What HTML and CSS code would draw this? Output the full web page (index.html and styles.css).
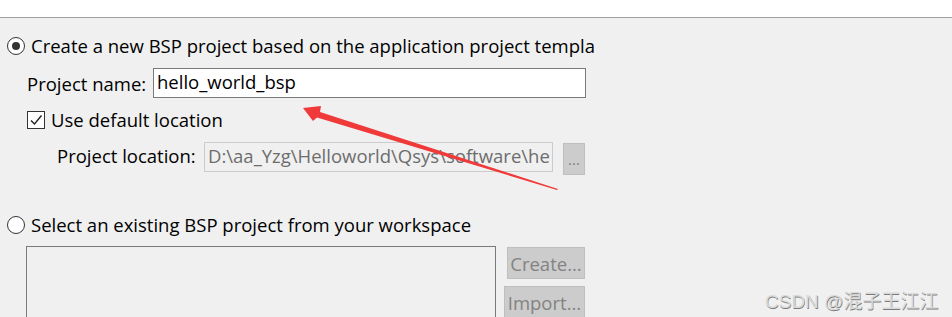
FILE: index.html
```html
<!DOCTYPE html>
<html lang="en">
<head>
    <meta charset="UTF-8">
    <title>New BSP Project</title>
    <link rel="stylesheet" href="styles.css">
</head>
<body>
    <div class="topbar"></div>
    <div class="panel">
        <div class="option first">
            <span class="radio checked"></span>
            <span>Create a new BSP project based on the application project templa</span>
        </div>
        <div class="field name-field">
            <label>Project name:</label>
            <div class="textbox">hello_world_bsp</div>
        </div>
        <div class="option check-row">
            <span class="checkbox">
                <svg width="14" height="14" viewBox="0 0 14 14"><path d="M2 7.5 L5.5 11 L12.5 2.5" fill="none" stroke="#222" stroke-width="1.4"/></svg>
            </span>
            <span>Use default location</span>
        </div>
        <div class="field location-field">
            <label>Project location:</label>
            <div class="textbox disabled">D:\aa_Yzg\Helloworld\Qsys\software\he</div>
            <div class="btn browse">...</div>
        </div>
        <div class="option second">
            <span class="radio"></span>
            <span>Select an existing BSP project from your workspace</span>
        </div>
        <div class="workspace">
            <div class="listbox"></div>
            <div class="side-buttons">
                <div class="btn create">Create...</div>
                <div class="btn import">Import...</div>
            </div>
        </div>
    </div>

    <svg class="arrow" width="952" height="317" viewBox="0 0 952 317">
        <polygon points="303,108 313,121 317,117.5 557,190 558,189 320,112 321,106" fill="#f03a3a"/>
    </svg>
    <div class="watermark">CSDN @混子王江江</div>
</body>
</html>
```

FILE: styles.css
```css
body {
    margin: 0;
    background-color: #f0f0f0;
    font-family: "Open Sans", "Noto Sans", sans-serif;
    font-size: 18.5px;
    color: #000;
    width: 952px;
    height: 317px;
    overflow: hidden;
    position: relative;
}
.topbar {
    height: 17px;
    background-color: #fff;
    border-bottom: 1px solid #a0a0a0;
}
.panel {
    display: flex;
    flex-direction: column;
}
.option {
    display: flex;
    align-items: center;
    height: 18px;
    line-height: 18px;
}
.option.first {
    margin-top: 19px;
    padding-left: 7px;
}
.option.second {
    margin-top: 44px;
    padding-left: 7px;
}
.option.check-row {
    margin-top: 13px;
    padding-left: 27px;
}
.radio {
    width: 16px;
    height: 16px;
    border: 1px solid #333;
    border-radius: 50%;
    background-color: #fff;
    margin-right: 6px;
    display: flex;
    align-items: center;
    justify-content: center;
}
.radio.checked::after {
    content: "";
    width: 8px;
    height: 8px;
    border-radius: 50%;
    background-color: #333;
}
.checkbox {
    width: 16px;
    height: 16px;
    border: 1px solid #333;
    background-color: #fff;
    margin-right: 6px;
    display: flex;
    align-items: center;
    justify-content: center;
}
.field {
    display: flex;
    align-items: center;
    height: 30px;
}
.name-field {
    margin-top: 13px;
    padding-left: 27px;
}
.name-field label {
    width: 126px;
}
.location-field {
    margin-top: 13px;
    padding-left: 57px;
}
.location-field label {
    width: 147px;
    margin-top: -3px;
}
.textbox {
    box-sizing: border-box;
    height: 30px;
    width: 433px;
    border: 1px solid #7a7a7a;
    background-color: #fff;
    padding-left: 3px;
    line-height: 26px;
    white-space: nowrap;
    overflow: hidden;
}
.textbox.disabled {
    width: 349px;
    border-color: #cccccc;
    background-color: #f0f0f0;
    color: #6d6d6d;
}
.btn {
    box-sizing: border-box;
    background-color: #cccccc;
    border: 1px solid #bfbfbf;
    color: #838383;
    display: flex;
    align-items: center;
    justify-content: center;
}
.browse {
    width: 22px;
    height: 32px;
    margin-left: 10px;
    align-self: flex-start;
    margin-top: 1px;
    font-size: 15px;
}
.workspace {
    display: flex;
    margin-top: 12px;
    padding-left: 26px;
}
.listbox {
    width: 470px;
    height: 71px;
    box-sizing: border-box;
    border: 1px solid #7a7a7a;
    border-bottom: none;
}
.side-buttons {
    display: flex;
    flex-direction: column;
    align-items: flex-end;
    width: 89px;
    gap: 7px;
    padding-top: 1px;
}
.create {
    width: 78px;
    height: 32px;
}
.import {
    width: 81px;
    height: 31px;
    border-bottom: none;
}
.arrow {
    position: absolute;
    left: 0;
    top: 0;
}
.watermark {
    position: absolute;
    left: 765px;
    top: 286px;
    font-family: "Liberation Sans", "Noto Sans CJK SC", sans-serif;
    font-size: 19px;
    color: #dadada;
    text-shadow: 0.6px 0.6px 0.6px #7a7a7a;
}
```
